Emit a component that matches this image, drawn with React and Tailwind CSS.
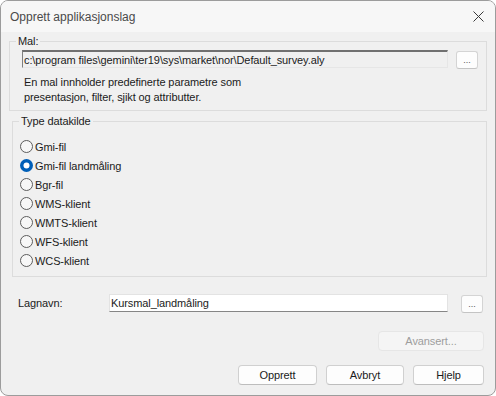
import React from "react";

function Radio({ label, checked }) {
  return (
    <div className="flex h-[19px] items-center">
      <svg width="13" height="13" viewBox="0 0 13 13" className="ml-[7px] shrink-0">
        {checked ? (
          <>
            <circle cx="6.5" cy="6.5" r="6.5" fill="#005fb8" />
            <circle cx="6.5" cy="6.5" r="3" fill="#ffffff" />
          </>
        ) : (
          <circle cx="6.5" cy="6.5" r="6" fill="#f7f7f7" stroke="#5c5c5c" strokeWidth="1" />
        )}
      </svg>
      <span className="ml-[2px] text-[11px] leading-[14px] tracking-[-0.1px] text-[#1b1b1b]">{label}</span>
    </div>
  );
}

function SmallBtn({ className = "" }) {
  return (
    <button className={"flex h-[18px] w-[22px] items-end justify-center rounded-[3px] border border-[#d4d4d4] border-b-[#c4c4c4] bg-[#fdfdfd] pb-[3px] text-[9px] leading-[9px] text-[#555] " + className}>
      ...
    </button>
  );
}

function Btn({ children, w, disabled }) {
  return (
    <button
      className={
        "flex h-[20px] items-center justify-center rounded-[4px] border text-[11px] leading-[14px] tracking-[-0.1px] " +
        (disabled
          ? "border-[#e6e6e6] bg-[#f5f5f5] text-[#9d9d9d] "
          : "border-[#d0d0d0] border-b-[#bdbdbd] bg-[#fdfdfd] text-[#1b1b1b] ") +
        w
      }
    >
      {children}
    </button>
  );
}

export default function App() {
  return (
    <div className="flex h-[396px] w-[496px] flex-col overflow-hidden rounded-[8px] border border-[#9c9c9c] bg-[#f0f0f0] font-['Liberation_Sans',Arial,sans-serif] text-[#1b1b1b]">
      <div className="flex h-[31px] shrink-0 items-center justify-between bg-[#f7f7f7] pl-[9px] pr-[11px]">
        <span className="text-[12px] leading-[14px] text-[#4a4a4a]">Opprett applikasjonslag</span>
        <svg width="11" height="11" viewBox="0 0 11 11">
          <path d="M0.5 0.5 L10.5 10.5 M10.5 0.5 L0.5 10.5" stroke="#3a3a3a" strokeWidth="1" fill="none" />
        </svg>
      </div>

      <fieldset className="ml-[8px] mt-[2px] w-[478px] border border-[#dcdcdc] pb-[5px]">
        <legend className="ml-[6px] px-[2px] text-[11px] leading-[14px] tracking-[-0.1px]">Mal:</legend>
        <div className="ml-[12px] mt-[2px] flex items-start">
          <div className="flex h-[18px] w-[426px] items-center border-b border-l border-r border-t-2 border-b-[#e6e6e6] border-l-[#808080] border-r-[#e6e6e6] border-t-[#707070] bg-[#f0f0f0] pl-[1px] text-[11px] leading-[14px] tracking-[-0.1px]">
            c:\program files\gemini\ter19\sys\market\nor\Default_survey.aly
          </div>
          <SmallBtn className="ml-[8px] mt-[1px]" />
        </div>
        <div className="ml-[14px] mt-[6px] text-[11px] leading-[15px] tracking-[-0.1px]">
          <div>En mal innholder predefinerte parametre som</div>
          <div>presentasjon, filter, sjikt og attributter.</div>
        </div>
      </fieldset>

      <fieldset className="ml-[11px] mt-[3px] w-[475px] border border-[#dcdcdc] pb-[6px]">
        <legend className="ml-[6px] px-[2px] text-[11px] leading-[14px] tracking-[-0.1px]">Type datakilde</legend>
        <div className="mt-[9px] flex flex-col">
          <Radio label="Gmi-fil" />
          <Radio label="Gmi-fil landmåling" checked />
          <Radio label="Bgr-fil" />
          <Radio label="WMS-klient" />
          <Radio label="WMTS-klient" />
          <Radio label="WFS-klient" />
          <Radio label="WCS-klient" />
        </div>
      </fieldset>

      <div className="mt-[17px] flex items-start pl-[17px]">
        <span className="mt-[2px] w-[91px] text-[11px] leading-[14px] tracking-[-0.1px]">Lagnavn:</span>
        <div className="flex h-[18px] w-[339px] items-center border border-[#e3e3e3] border-b-[#868686] bg-white pl-[1px] text-[11px] leading-[14px] tracking-[-0.1px]">
          Kursmal_landmåling
        </div>
        <SmallBtn className="ml-[13px] mt-[1px]" />
      </div>

      <div className="mt-[18px] flex justify-end pr-[11px]">
        <Btn w="w-[106px]" disabled>
          Avansert...
        </Btn>
      </div>

      <div className="mt-[14px] flex justify-end gap-[9px] pr-[11px]">
        <Btn w="w-[79px]">Opprett</Btn>
        <Btn w="w-[78px]">Avbryt</Btn>
        <Btn w="w-[71px]">Hjelp</Btn>
      </div>
    </div>
  );
}
